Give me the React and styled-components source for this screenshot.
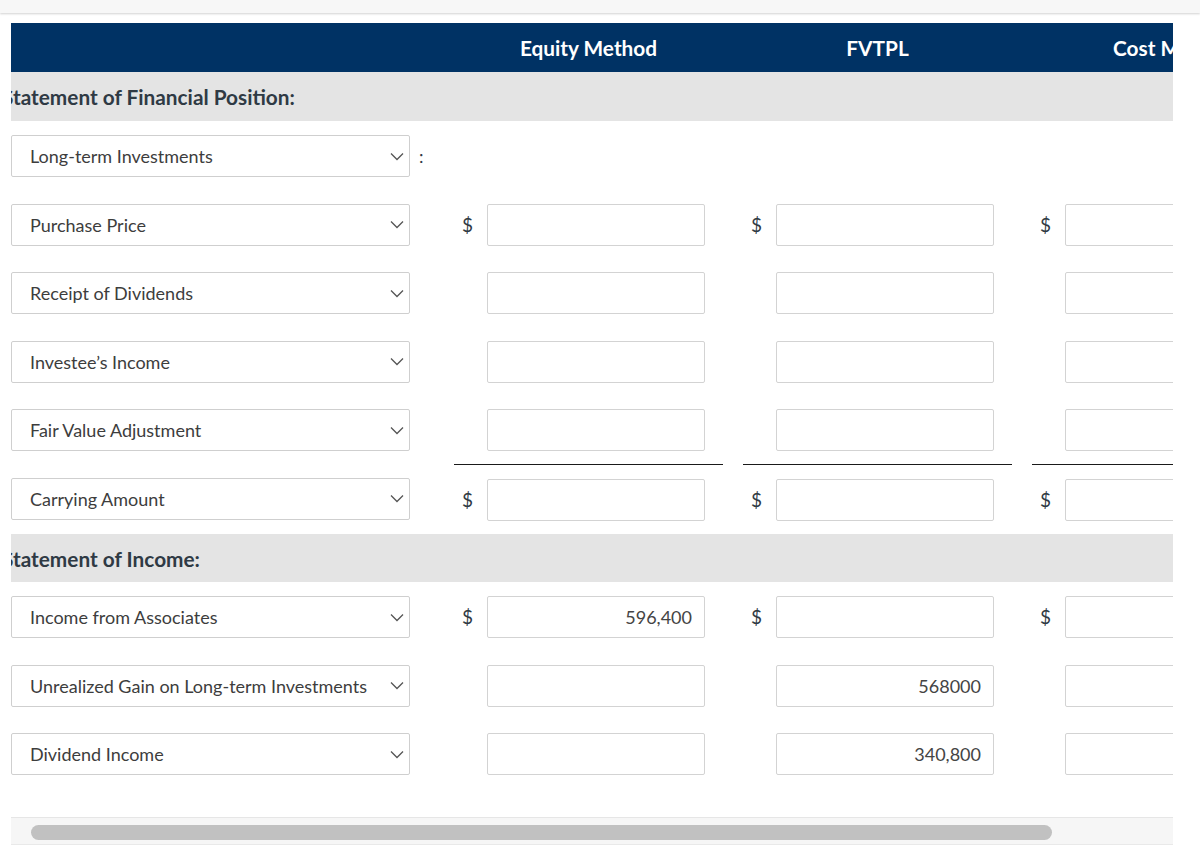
import React from 'react';
import styled, { createGlobalStyle } from 'styled-components';

const GlobalStyle = createGlobalStyle`
  body {
    margin: 0;
    background: #fff;
    font-family: Lato, "Open Sans", sans-serif;
    color: #333;
  }
`;

const TopStrip = styled.div`
  height: 13px;
  background: #f7f7f7;
  box-shadow: 0 1px 2px rgba(0, 0, 0, 0.18);
`;

const Frame = styled.div`
  margin: 10px 0 0 11px;
  width: 1162px;
  overflow: hidden;
`;

const Grid = styled.div`
  display: grid;
  grid-template-columns: 399px 44px 289px 289px 289px;
  width: 1310px;
`;

const HeadRow = styled(Grid)`
  height: 49px;
  background: #003264;
  align-items: center;
`;

const HeadCell = styled.div`
  width: ${p => p.$w || 269}px;
  text-align: center;
  color: #fff;
  font-weight: 700;
  font-size: 20.8px;
  white-space: nowrap;
`;

const Band = styled.div`
  height: ${p => p.$h || 49}px;
  margin-top: ${p => p.$mt || 0}px;
  background: #e4e4e4;
  display: flex;
  align-items: center;
  font-weight: 700;
  font-size: 20.8px;
  color: #2f3a44;
  white-space: nowrap;

  span {
    margin-left: -9px;
  }
`;

const Row = styled(Grid)`
  height: 68.5px;
`;

const SelectBox = styled.div`
  margin-top: 14px;
  height: 42px;
  box-sizing: border-box;
  border: 1px solid #cfcfcf;
  border-radius: 2px;
  display: flex;
  align-items: center;
  justify-content: space-between;
  padding: 0 5px 0 18px;
  font-size: 18px;
  color: #3d3d3d;
  white-space: nowrap;
`;

const Colon = styled.div`
  margin-top: 14px;
  height: 42px;
  display: flex;
  align-items: center;
  padding-left: 9px;
  font-size: 18px;
  color: #2f3a44;
`;

const ValueCell = styled.div`
  width: 269px;
  box-sizing: border-box;
  padding-top: 14px;
  display: flex;
  align-items: flex-start;
  border-top: ${p => (p.$total ? '1.5px solid #1a1a1a' : 'none')};
`;

const Dollar = styled.span`
  width: 33px;
  height: 42px;
  line-height: 42px;
  box-sizing: border-box;
  padding-left: 8px;
  font-size: 19px;
  color: #2f3a44;
`;

const Amount = styled.div`
  width: 218px;
  height: 42px;
  box-sizing: border-box;
  border: 1px solid #d3d3d3;
  border-radius: 2px;
  display: flex;
  align-items: center;
  justify-content: flex-end;
  padding-right: 12px;
  font-size: 18px;
  color: #444;
`;

const Track = styled.div`
  margin-top: 29.5px;
  height: 28px;
  box-sizing: border-box;
  background: #f6f6f6;
  border-top: 1px solid #e6e6e6;
  border-bottom: 1px solid #e9e9e9;
  padding: 7px 0 0 20px;
`;

const Thumb = styled.div`
  width: 1021px;
  height: 15px;
  border-radius: 8px;
  background: #c1c1c1;
`;

const Chevron = () => (
  <svg width="14" height="9" viewBox="0 0 14 9">
    <polyline points="1,1.5 7,7.5 13,1.5" fill="none" stroke="#555" strokeWidth="1.3" />
  </svg>
);

const position = [
  { label: 'Long-term Investments', colon: true, hideValues: true },
  { label: 'Purchase Price', dollars: true },
  { label: 'Receipt of Dividends' },
  { label: 'Investee\u2019s Income' },
  { label: 'Fair Value Adjustment' },
  { label: 'Carrying Amount', dollars: true, total: true },
];

const income = [
  { label: 'Income from Associates', dollars: true, values: ['596,400', '', ''] },
  { label: 'Unrealized Gain on Long-term Investments', values: ['', '568000', ''] },
  { label: 'Dividend Income', values: ['', '340,800', ''] },
];

function LineRow({ row }) {
  return (
    <Row>
      <SelectBox>
        {row.label}
        <Chevron />
      </SelectBox>
      <Colon>{row.colon ? ':' : ''}</Colon>
      {[0, 1, 2].map(i => (
        <ValueCell key={i} $total={row.total}>
          {!row.hideValues && (
            <>
              <Dollar>{row.dollars ? '$' : ''}</Dollar>
              <Amount>{row.values ? row.values[i] : ''}</Amount>
            </>
          )}
        </ValueCell>
      ))}
    </Row>
  );
}

export default function App() {
  return (
    <>
      <GlobalStyle />
      <TopStrip />
      <Frame>
        <HeadRow>
          <div />
          <div />
          <HeadCell>Equity Method</HeadCell>
          <HeadCell>FVTPL</HeadCell>
          <HeadCell $w={283}>Cost Method</HeadCell>
        </HeadRow>
        <Band>
          <span>Statement of Financial Position:</span>
        </Band>
        {position.map(r => (
          <LineRow key={r.label} row={r} />
        ))}
        <Band $h={48} $mt={2}>
          <span>Statement of Income:</span>
        </Band>
        {income.map(r => (
          <LineRow key={r.label} row={r} />
        ))}
        <Track>
          <Thumb />
        </Track>
      </Frame>
    </>
  );
}
